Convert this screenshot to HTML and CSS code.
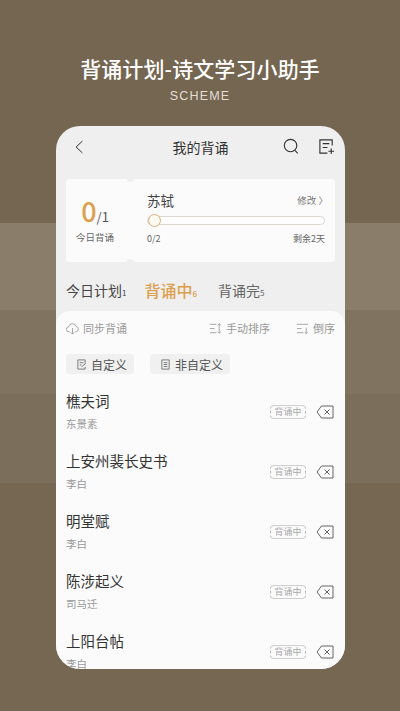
FILE: index.html
```html
<!DOCTYPE html>
<html lang="zh">
<head>
<meta charset="utf-8">
<title>背诵计划</title>
<link rel="stylesheet" href="styles.css">
</head>
<body>
<header class="hero">
  <h1 class="hero-title">背诵计划-诗文学习小助手</h1>
  <p class="hero-sub">SCHEME</p>
</header>
<main class="phone">
  <div class="nav">
    <div class="nav-side">
      <svg class="nav-back" viewBox="0 0 12 18"><path d="M10 2 2.500 9 10 16"/></svg>
    </div>
    <div class="nav-title">我的背诵</div>
    <div class="nav-side nav-right">
      <svg class="nav-icon" viewBox="0 0 18 18"><circle cx="8" cy="8" r="6.600"/><path d="m12.600 13 3 3.200"/></svg>
      <svg class="nav-icon" viewBox="0 0 18 18"><path d="M15 8V2H2v14h8M5 6h7M5 10h5M11 14h6M14 11v6"/></svg>
    </div>
  </div>
  <section class="card">
    <div class="today">
      <div class="today-count"><b>0</b>/1</div>
      <div class="today-label">今日背诵</div>
    </div>
    <div class="plan">
      <div class="plan-head"><span class="plan-name">苏轼</span><span class="plan-edit">修改 〉</span></div>
      <div class="track"><span class="knob"></span></div>
      <div class="plan-foot"><span>0/2</span><span>剩余2天</span></div>
    </div>
  </section>
  <div class="tabs">
    <span class="tab">今日计划<small>1</small></span>
    <span class="tab tab-on">背诵中<small>6</small></span>
    <span class="tab tab-dim">背诵完<small>5</small></span>
  </div>
  <section class="sheet">
    <div class="tools">
      <span class="tool tool-sync">
        <svg class="tool-icon" viewBox="0 0 14 14"><path d="M4 10.500H3.200a2.700 2.700 0 0 1-.2-5.400 4 4 0 0 1 7.800-.3 2.900 2.900 0 0 1 .2 5.700H10M7 6.500V13M5 11l2 2 2-2"/></svg>同步背诵</span>
      <span class="tool tool-sort">
        <svg class="tool-icon" viewBox="0 0 14 14"><path d="M1 2.500h7M1 7h5M1 11.500h7M11 2v10M9.300 3.500 11 2l1.700 1.500M9.300 10.500 11 12l1.700-1.500"/></svg>手动排序</span>
      <span class="tool">
        <svg class="tool-icon" viewBox="0 0 14 14"><path d="M1 2.500h12M1 7h5M1 11.500h7M11 6v6.500M9.300 11 11 12.500l1.700-1.500"/></svg>倒序</span>
    </div>
    <div class="chips">
      <span class="chip"><svg class="chip-icon" viewBox="0 0 12 12"><path d="M10 5V1H2v10h8V8.500M4 4h4M4 6.500h2M6 8.500 10.500 5"/></svg>自定义</span>
      <span class="chip"><svg class="chip-icon" viewBox="0 0 12 12"><path d="M2 1h8v10H2zM4 4h4M4 6h4M4 8.200h4"/></svg>非自定义</span>
    </div>
    <ul class="list">
      <li class="row">
        <div class="row-text"><div class="row-title">樵夫词</div><div class="row-author">东景素</div></div>
        <span class="badge">背诵中</span>
        <svg class="del" viewBox="0 0 18 14"><path d="M5.500 1H17v12H5.500L1 7zM8.500 4.500l5 5M13.500 4.500l-5 5"/></svg>
      </li>
      <li class="row">
        <div class="row-text"><div class="row-title">上安州裴长史书</div><div class="row-author">李白</div></div>
        <span class="badge">背诵中</span>
        <svg class="del" viewBox="0 0 18 14"><path d="M5.500 1H17v12H5.500L1 7zM8.500 4.500l5 5M13.500 4.500l-5 5"/></svg>
      </li>
      <li class="row">
        <div class="row-text"><div class="row-title">明堂赋</div><div class="row-author">李白</div></div>
        <span class="badge">背诵中</span>
        <svg class="del" viewBox="0 0 18 14"><path d="M5.500 1H17v12H5.500L1 7zM8.500 4.500l5 5M13.500 4.500l-5 5"/></svg>
      </li>
      <li class="row">
        <div class="row-text"><div class="row-title">陈涉起义</div><div class="row-author">司马迁</div></div>
        <span class="badge">背诵中</span>
        <svg class="del" viewBox="0 0 18 14"><path d="M5.500 1H17v12H5.500L1 7zM8.500 4.500l5 5M13.500 4.500l-5 5"/></svg>
      </li>
      <li class="row">
        <div class="row-text"><div class="row-title">上阳台帖</div><div class="row-author">李白</div></div>
        <span class="badge">背诵中</span>
        <svg class="del" viewBox="0 0 18 14"><path d="M5.500 1H17v12H5.500L1 7zM8.500 4.500l5 5M13.500 4.500l-5 5"/></svg>
      </li>
    </ul>
  </section>
</main>
</body>
</html>
```
FILE: styles.css
```css
* { box-sizing: border-box; }
html, body { margin: 0; padding: 0; }
body {
  width: 400px;
  height: 711px;
  overflow: hidden;
  font-family: "Noto Sans CJK SC", "Noto Sans", sans-serif;
  background: linear-gradient(to bottom,
    #746650 0, #746650 223px,
    #8a7d6a 223px, #8a7d6a 310px,
    #807360 310px, #807360 394px,
    #7b6e5b 394px, #7b6e5b 483px,
    #756751 483px, #756751 711px);
}
.hero { height: 126px; padding-top: 54px; text-align: center; }
.hero-title {
  margin: 0;
  height: 28px;
  font-size: 21px;
  line-height: 28px;
  font-weight: 500;
  letter-spacing: .1px;
  color: #fff;
}
.hero-sub {
  margin: 5px 0 0;
  font-family: "Liberation Sans", sans-serif;
  font-size: 12.500px;
  line-height: 18px;
  letter-spacing: 1.200px;
  color: #e3ded5;
}
.phone {
  width: 289px;
  height: 543px;
  margin-left: 56px;
  border-radius: 24px;
  overflow: hidden;
  background: #efefef;
}
.nav {
  height: 53px;
  padding: 0 10px 12px 18px;
  display: flex;
  align-items: center;
}
.nav svg { fill: none; stroke: #333; stroke-width: 1.200; }
.nav-side { flex: 1; display: flex; align-items: center; }
.nav-right { justify-content: flex-end; gap: 18px; }
.nav-back { width: 10px; height: 16px; }
.nav-title {
  margin-right: 8px;
  font-size: 14px;
  line-height: 20px;
  color: #333;
}
.nav-icon { width: 17px; height: 17px; }
.card {
  position: relative;
  width: 269px;
  height: 83px;
  margin-left: 10px;
  border-radius: 4px;
  background: #fbfbfb;
  display: flex;
}
.card::before, .card::after {
  content: "";
  position: absolute;
  left: 61px;
  width: 7px;
  height: 3px;
  background: #efefef;
}
.card::before { top: 0; border-radius: 0 0 3px 3px; }
.card::after { bottom: 0; border-radius: 3px 3px 0 0; }
.today { width: 58px; padding-top: 17px; text-align: center; flex: none; }
.today-count { font-size: 13px; line-height: 30px; height: 30px; color: #555; white-space: nowrap; }
.today-count b { font-size: 27px; font-weight: 500; color: #dda04f; }
.today-label { margin-top: 4px; font-size: 9.500px; line-height: 14px; color: #666; white-space: nowrap; }
.plan { flex: 1; padding: 12px 10px 0 23px; }
.plan-head { display: flex; justify-content: space-between; align-items: center; height: 18px; }
.plan-name { font-size: 13.500px; color: #444; }
.plan-edit { font-size: 9.500px; color: #777; margin-right: -3px; }
.track {
  height: 9px;
  margin-top: 7px;
  border: 1px solid #ddd9d2;
  border-radius: 5px;
  background: #fff;
  display: flex;
  align-items: center;
}
.knob {
  width: 13px;
  height: 13px;
  flex: none;
  border: 1px solid #dcae72;
  border-radius: 50%;
  background: #fdfaf4;
}
.plan-foot {
  display: flex;
  justify-content: space-between;
  margin-top: 7px;
  font-size: 9px;
  line-height: 13px;
  color: #666;
}
.tabs {
  height: 49px;
  padding: 10px 0 0 10px;
  display: flex;
  align-items: center;
  gap: 20px;
}
.tab { font-size: 14px; line-height: 20px; color: #444; }
.tab small { font-size: 8px; }
.tab-on { margin-left: -2px; margin-right: 1px; font-size: 16px; font-weight: 500; color: #dda04f; }
.tab-dim { color: #666; }
.sheet {
  height: 358px;
  padding: 0 10px;
  border-radius: 14px 14px 0 0;
  background: #fbfbfb;
}
.tools {
  height: 34px;
  display: flex;
  align-items: center;
  font-size: 11px;
  color: #999;
}
.tool { display: flex; align-items: center; gap: 4px; }
.tool-sync { margin-right: auto; }
.tool-sort { margin-right: 26px; }
.tool-icon { width: 13px; height: 13px; fill: none; stroke: #999; stroke-width: .9; }
.chips { display: flex; gap: 16px; margin-top: 9px; height: 20px; }
.chip {
  height: 20px;
  padding: 0 7px 0 10px;
  display: flex;
  align-items: center;
  gap: 4px;
  border-radius: 4px;
  background: #f0f0f0;
  font-size: 12px;
  color: #555;
}
.chip-icon { width: 11px; height: 11px; fill: none; stroke: #666; stroke-width: .9; }
.list { margin: 8px 0 0; padding: 0; list-style: none; }
.row { height: 60px; display: flex; align-items: center; }
.row-text { flex: 1; margin-top: -2px; }
.row-title { font-size: 14.500px; line-height: 20px; color: #333; }
.row-author { margin-top: 6px; font-size: 10.500px; line-height: 14px; color: #999; }
.badge {
  width: 36px;
  height: 14px;
  border-top: 1px solid #cfcfcf;
  border-bottom: 1px solid #cfcfcf;
  border-left: 1px dashed #bbb;
  border-right: 1px dashed #bbb;
  border-radius: 4px;
  font-size: 9px;
  line-height: 12px;
  text-align: center;
  color: #aaa;
  background: #fbfbfb;
}
.del { width: 18px; height: 14px; margin-left: 10px; margin-right: 1px; fill: none; stroke: #555; stroke-width: .9; }
```
